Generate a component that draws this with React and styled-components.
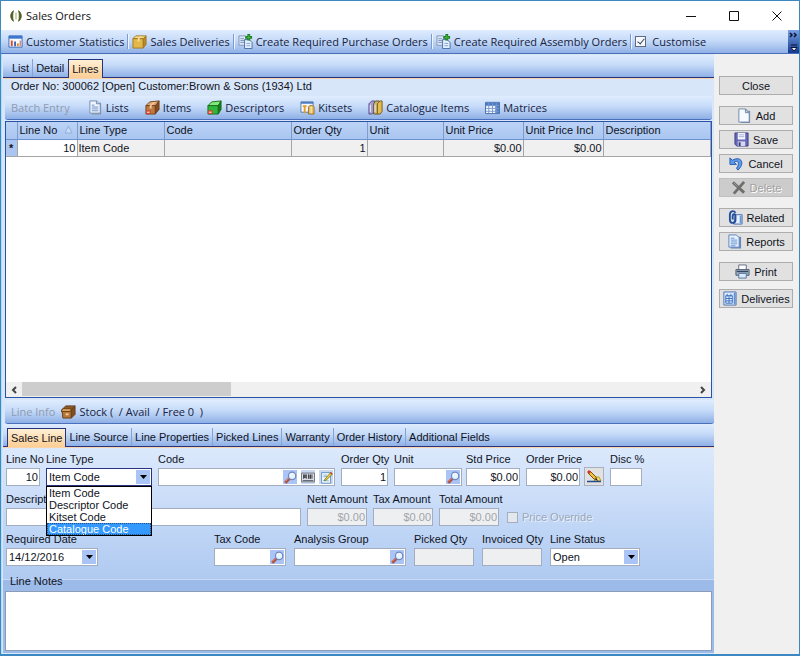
import React, { useState } from 'react';
import styled, { createGlobalStyle, css } from 'styled-components';

const GlobalStyle = createGlobalStyle`
	* {
		box-sizing: border-box;
	}

	body {
		margin: 0;
		background: #f0f0f0;
		color: #10131c;
		font-family: 'Liberation Sans', Arial, sans-serif;
		font-size: 11px;
		line-height: 14px;
	}

	button,
	input,
	select,
	textarea {
		margin: 0;
		color: inherit;
		font: inherit;
	}

	svg {
		flex-shrink: 0;
	}
`;

const barGradient = 'linear-gradient(#dfecfe, #c6dbf9 45%, #8fb0e6)';

const Window = styled.div`
	display: flex;
	flex-direction: column;
	min-height: 100vh;
	border: 1px solid #3c88c2;
	border-bottom-width: 2px;
`;

const TitleBar = styled.header`
	display: flex;
	align-items: center;
	height: 29px;
	padding: 0 1px 0 8px;
	background: #fff;

	h1 {
		flex: 1;
		margin: 0;
		padding-left: 3px;
		font: 11px/16px 'Open Sans', sans-serif;
		color: #111;
	}
`;

const WindowButton = styled.button`
	display: flex;
	align-items: center;
	justify-content: center;
	width: 43px;
	height: 27px;
	padding: 0;
	border: 0;
	background: none;
`;

const Toolbar = styled.div`
	display: flex;
	align-items: center;
	height: 24px;
	padding-left: ${(props) => (props.$inset ? '6px' : '7px')};
	background: ${barGradient};
	border-bottom: 1px solid #4a70bd;
	border-radius: ${(props) => (props.$inset ? '3px 0 3px 3px' : '0')};
	font: 11px/16px 'Open Sans', sans-serif;
	white-space: nowrap;
`;

const ToolCaption = styled.span`
	margin-right: ${(props) => props.$gap || 0}px;
	color: #8f9bb0;
`;

const ToolButton = styled.button`
	display: flex;
	align-items: center;
	gap: 3px;
	margin-right: ${(props) => (props.$loose ? '16px' : '0')};
	padding: 0;
	border: 0;
	background: none;
	color: #16233f;
	white-space: pre;
`;

const ToolCheck = styled.label`
	display: flex;
	align-items: center;
	gap: 6px;
	color: #16233f;
`;

const Tick = styled.input`
	appearance: none;
	width: 11px;
	height: 11px;
	border: 1px solid #5d6a80;
	background: ${(props) => (props.disabled ? '#e3e7ee' : '#f6f9fd')};

	&:disabled {
		border-color: #a5aebd;
	}

	&:checked::after {
		content: '';
		display: block;
		width: 3px;
		height: 6px;
		margin: 0 0 0 3px;
		border: solid #3a4558;
		border-width: 0 1px 1px 0;
		transform: rotate(40deg);
	}
`;

const Separator = styled.span`
	width: 2px;
	height: 15px;
	margin: 0 3px;
	border-left: 1px solid #7d9ad0;
	border-right: 1px solid #eef5ff;
`;

const Overflow = styled.button`
	align-self: stretch;
	width: 11px;
	margin-left: auto;
	padding: 0;
	border: 0;
	background: linear-gradient(#7aa0e4, #14388d);
`;

const Body = styled.div`
	display: flex;
	flex: 1;
`;

const Main = styled.main`
	display: flex;
	flex-direction: column;
	flex: 1;
	min-width: 0;
	padding: 1px 0 1px 1px;
	border-left: 1px solid #b5dcf5;
	background: #d8e6fa;
`;

const TabStrip = styled.div`
	display: flex;
	align-items: flex-end;
	height: 23px;
	padding-left: ${(props) => (props.$deep ? '6px' : '4px')};
	border-bottom: 1px solid #27347d;
	background: ${barGradient};
	box-shadow: 0 1px #fbd3ab;
`;

const Tab = styled.button`
	height: 18px;
	margin-bottom: 0;
	padding: 0 3px;
	border: 0;
	border-right: 1px solid ${(props) => (props.$last ? 'transparent' : '#86a3d8')};
	background: none;
	white-space: nowrap;

	${(props) =>
		props.$active &&
		css`
			height: 19px;
			margin-bottom: -1px;
			border: 1px solid #27347d;
			border-bottom: 0;
			background: linear-gradient(#fff0d5, #fdce94);
		`}
`;

const OrderInfo = styled.div`
	height: 18px;
	padding: 1px 8px;
`;

const Inset = styled.div`
	padding-top: ${(props) => props.$top || 0}px;
	padding-left: 2px;
	padding-right: ${(props) => props.$right || 0}px;
`;

const GridPanel = styled.div`
	display: flex;
	flex-direction: column;
	flex: 1;
	min-height: 220px;
	margin: 1px 2px 1px 2px;
	border: 1px solid #2a52a5;
	background: #fff;
`;

const GridArea = styled.div`
	flex: 1;
	overflow: hidden;
`;

const Grid = styled.table`
	width: 100%;
	table-layout: fixed;
	border-collapse: collapse;

	th {
		height: 17px;
		padding: 0 2px;
		border-right: 1px solid #7f9ccf;
		border-bottom: 1px solid #6e92d1;
		background: linear-gradient(#bcd3f6, #a9c5f0);
		font-weight: 400;
		text-align: left;
		white-space: nowrap;
	}

	td {
		height: 17px;
		padding: 0 1px;
		border-right: 1px solid #a5a5a5;
		border-bottom: 1px solid #a5a5a5;
		background: #f0f0f0;
		white-space: nowrap;
	}

	.marker {
		padding: 0;
		background: #a9c5f0;
		text-align: center;
		font-weight: 700;
	}

	.current {
		background: #fff;
	}

	.number {
		text-align: right;
	}

	svg {
		float: right;
		margin: 2px 2px 0 0;
	}
`;

const ScrollBar = styled.div`
	display: flex;
	height: 15px;
	background: #f0f0f0;

	button {
		display: flex;
		align-items: center;
		justify-content: center;
		width: 16px;
		padding: 0;
		border: 0;
		background: none;
	}
`;

const Track = styled.div`
	flex: 1;

	&::before {
		content: '';
		display: block;
		width: 31%;
		height: 14px;
		background: #cdcdcd;
	}
`;

const LineForm = styled.form`
	margin-top: 1px;
	background: linear-gradient(#dce9fc, #bcd3f5 45%, #98b7e7);
`;

const Fields = styled.div`
	display: flex;
	flex-direction: column;
	gap: 5px;
	padding: 3px 3px 13px 3px;
`;

const FieldRow = styled.div`
	display: flex;
	align-items: flex-end;
	gap: ${(props) => props.$gap || 6}px;
`;

const FieldPair = styled.div`
	display: flex;
	align-items: flex-end;
	gap: 4px;
`;

const Field = styled.div`
	position: relative;
	width: ${(props) => props.$width}px;

	label {
		display: block;
		height: 17px;
		padding-top: 1px;
		white-space: nowrap;
	}
`;

const FieldBox = styled.div`
	display: flex;
	align-items: center;
	width: ${(props) => (props.$width ? `${props.$width}px` : '100%')};
	height: 18px;
	padding: 1px;
	border: 1px solid ${(props) => (props.$open ? '#27347d' : '#a3adbd')};
	background: ${(props) => (props.$disabled ? '#eeeff1' : '#fff')};

	input,
	select {
		appearance: none;
		flex: 1;
		min-width: 0;
		height: 14px;
		padding: 0 0 0 1px;
		border: 0;
		outline: 0;
		background: none;
		text-align: ${(props) => (props.$right ? 'right' : 'left')};
	}

	input:disabled {
		color: #a0a4aa;
	}
`;

const BoxButton = styled.button`
	display: flex;
	align-items: center;
	justify-content: center;
	width: 14px;
	height: 14px;
	margin-left: ${(props) => (props.$spaced ? '4px' : '0')};
	padding: 0;
	border: 0;
	background: ${(props) => (props.$plain ? '#c9d9f4' : '#a9c4f5')};
`;

const OptionList = styled.ul`
	position: absolute;
	z-index: 1;
	top: 100%;
	left: 0;
	width: 100%;
	margin: 0;
	padding: 0;
	border: 1px solid #000;
	background: #fff;
	list-style: none;
`;

const Option = styled.li`
	height: 12px;
	padding-left: 2px;
	line-height: 12px;
	${(props) =>
		props.$selected &&
		css`
			background: #3399ff;
			color: #fff;
			outline: 1px dotted #26507c;
			outline-offset: -1px;
		`}
`;

const EditButton = styled.button`
	width: 20px;
	height: 19px;
	padding: 1px;
	border: 1px solid #a9b0bb;
	background: #e1e1e1;
`;

const Override = styled.label`
	display: flex;
	align-items: center;
	gap: 4px;
	height: 18px;
	margin-left: 2px;
	color: #9ba7ba;
	text-shadow: 1px 1px #eaf2fd;
`;

const Notes = styled.div`
	padding: 0 2px 2px 2px;
	border-top: 1px solid #c9dbf6;
	background: #9dbbe9;

	label {
		position: relative;
		top: -6px;
		display: block;
		height: 11px;
		padding-left: 5px;
	}

	textarea {
		display: block;
		width: 100%;
		height: 60px;
		border: 1px solid #8b9cb9;
		background: #fff;
		resize: none;
	}
`;

const Side = styled.aside`
	display: flex;
	flex-direction: column;
	gap: 11px;
	width: 85px;
	padding: 22px 6px 0 5px;
	background: #f0f0f0;
`;

const ButtonGroup = styled.div`
	display: flex;
	flex-direction: column;
	gap: ${(props) => props.$gap || 5}px;
`;

const SideButton = styled.button`
	display: flex;
	align-items: center;
	justify-content: center;
	gap: 4px;
	height: 19px;
	padding: 0;
	border: 1px solid #adadad;
	background: #e1e1e1;

	&:disabled {
		border-color: #bfbfbf;
		background: #ccc;
		color: #a0a0a0;
		text-shadow: 1px 1px #fff;
	}
`;

const icons = {
	logo: (
		<>
			<path d="M5 2C1 5 1 11 5 14C4 10 4 6 5 2Z" fill="#4e5a1c" stroke="#4e5a1c" />
			<path d="M11 2C15 5 15 11 11 14C12 10 12 6 11 2Z" fill="#4e5a1c" stroke="#4e5a1c" />
			<path d="M8 4v8" stroke="#b4bd86" strokeWidth="1.5" />
		</>
	),
	stats: (
		<>
			<path d="M1 2h14v12H1z" fill="#f7faff" stroke="#3668b5" />
			<path d="M1 2h14v3H1z" fill="#3d76cc" />
			<path d="M4 7v6" stroke="#d9482b" strokeWidth="2" />
			<path d="M7.500 8v5" stroke="#3a66b8" strokeWidth="2" />
			<path d="M10.500 10v3" stroke="#e08c25" strokeWidth="2" />
			<path d="M13 7v6" stroke="#d9482b" />
		</>
	),
	box: (
		<>
			<path d="M1 5l3-3h11l-3 3z" fill="#f8dd82" stroke="#a07a26" />
			<path d="M1 5h11v10H1z" fill="#e3b848" stroke="#a07a26" />
			<path d="M12 5l3-3v9l-3 4z" fill="#b98a26" stroke="#a07a26" />
			<path d="M6 5l3-3h1L8 5v3H6z" fill="#f8e09a" />
		</>
	),
	copyAdd: (
		<>
			<path d="M1 2h7v10H1z" fill="#dce8f8" stroke="#8094b5" />
			<path d="M2.500 5h4M2.500 7h4M2.500 9h4" stroke="#7690ba" />
			<path d="M7 6h5l3 3v6.500H7z" fill="#e5f0ff" stroke="#496f9f" />
			<path d="M9 10h4M9 12.500h4" stroke="#7ca0d5" />
			<path d="M11.500 0v7M8 3.500h7" stroke="#1b7b21" strokeWidth="3" />
			<path d="M11.500 1v5M9 3.500h5" stroke="#48bb43" />
		</>
	),
	list: (
		<>
			<path d="M4 3h10v12.500H4z" fill="#8296b5" />
			<path d="M2 1h7l4 3v10H2z" fill="#eef5ff" stroke="#7489ab" />
			<path d="M9 1v3h4" fill="#c5d7ef" stroke="#7489ab" />
			<path d="M4 5.500h3M4 7.500h7M4 9.500h7M4 11.500h7" stroke="#6e91c8" />
		</>
	),
	items: (
		<>
			<path d="M1 6l4-4 10-1-3 5z" fill="#dfa873" stroke="#74431f" />
			<path d="M1 6h10v9H1z" fill="#bd7a3f" stroke="#74431f" />
			<path d="M11 6l4-5v9l-4 5z" fill="#854b20" stroke="#74431f" />
			<path d="M5 6l4-4 2 0-4 4v3H5z" fill="#f2cda2" />
			<path d="M1 11h5v4H1z" fill="#d3452d" />
			<path d="M2 13h3" stroke="#fff" />
		</>
	),
	descriptors: (
		<>
			<path d="M1 6l4-4 10-1-3 5z" fill="#82ea7a" stroke="#16701c" />
			<path d="M1 6h11v9H1z" fill="#32b53b" stroke="#16701c" />
			<path d="M12 6l3-5v9l-3 5z" fill="#157a20" stroke="#16701c" />
			<path d="M1 11h5v4H1z" fill="#d3452d" />
			<path d="M2 13h3" stroke="#fff" />
		</>
	),
	kitsets: (
		<>
			<path d="M1 2h13v11H1z" fill="#f4f7fc" stroke="#59779f" />
			<path d="M1 2h13v2H1z" fill="#4c7cc7" />
			<path d="M5 6v8M3 6.500h4" stroke="#e49c25" strokeWidth="2" />
			<path d="M9 15V8c0-3 6-3 6 0v7z" fill="#e7bf66" stroke="#94702b" />
			<path d="M12 7v7" stroke="#fff0bd" />
		</>
	),
	catalogue: (
		<>
			<path d="M1 4l3-3h3v11l-3 3H1z" fill="#a89bd4" stroke="#5a4e91" />
			<path d="M6 4l2-3h4v11l-2 3H6z" fill="#c5b676" stroke="#605328" />
			<path d="M10 4l3-3h2v11l-2 3h-3z" fill="#e6bd4a" stroke="#7a581a" />
			<path d="M2.500 5v8M7.500 5v8" stroke="#efefff" />
		</>
	),
	matrix: (
		<>
			<path d="M0.500 2.500h15v12h-15z" fill="#f6faff" stroke="#4266a7" />
			<path d="M1 3h14v3H1zM11 6h4v8h-4z" fill="#4c7cc8" />
			<path d="M1 6h14M1 9h14M1 12h14M4 3v11M8 3v11M12 3v11" stroke="#7898cc" />
		</>
	),
	stock: (
		<>
			<path d="M1 6h10v9H2z" fill="#b87638" stroke="#684019" />
			<path d="M11 6l4-4v9l-4 4z" fill="#824c1d" stroke="#684019" />
			<path d="M1 6l4-4h10l-4 4z" fill="#8a5a2c" stroke="#684019" />
			<path d="M0 8l2-3h9l-1 3z" fill="#dda35c" stroke="#684019" />
			<path d="M5 11h3" stroke="#f0cf9c" strokeWidth="2" />
		</>
	),
	search: (
		<>
			<path d="M1.500 14.500l5-5" stroke="#ad493d" strokeWidth="3.500" />
			<path d="M2 13l4-4" stroke="#eb9c79" />
			<circle cx="10" cy="6" r="4.500" fill="#e4f5ff" stroke="#7385bb" strokeWidth="1.500" />
			<path d="M7.500 6c0-2 1-3 3-3" fill="none" stroke="#fff" />
		</>
	),
	barcode: (
		<>
			<path d="M0.500 3.500h15v10h-15z" fill="#dadde3" stroke="#616773" />
			<path d="M3 5v5M6 5v5M8.500 5v5M12.500 5v5" stroke="#20242c" />
			<path d="M4.500 5v4M10.500 5v5" stroke="#20242c" strokeWidth="1.500" />
			<path d="M2 12h12" stroke="#555d69" />
		</>
	),
	note: (
		<>
			<path d="M2 2h11v13H2z" fill="#f6fbff" stroke="#4d83b5" />
			<path d="M4 5h5M4 7h5M4 12h7" stroke="#78a5cf" />
			<path d="M6 10l7-8 2 2-7 7-3 1z" fill="#f7cf35" stroke="#64752b" />
			<path d="M13 2l2 2" stroke="#cb4227" strokeWidth="2" />
		</>
	),
	pencil: (
		<>
			<path d="M8 12l2-4h3l2 4z" fill="#f5e36f" stroke="#b39a33" />
			<path d="M1 12.500h14" stroke="#214a91" strokeWidth="1.500" />
			<path d="M2 4l2-2 6 6 1 3-3-1z" fill="#f2c12d" stroke="#77571a" />
			<path d="M1 3l2-2 2 2-2 2z" fill="#cf352b" />
			<path d="M9.500 9.500l2 2" stroke="#222" />
		</>
	),
	page: (
		<>
			<path d="M4 3h10v13H4z" fill="#7b8dac" />
			<path d="M2 1h7l4 4v10H2z" fill="#f7fbff" stroke="#7287ab" />
			<path d="M9 1v4h4z" fill="#bbd0ec" stroke="#7287ab" />
		</>
	),
	save: (
		<>
			<path d="M1 1h14v14H3l-2-2z" fill="#6668b6" stroke="#3e3e85" />
			<path d="M4 1h8v7H4z" fill="#f5f7ff" />
			<path d="M5 3h6M5 5h6" stroke="#a9afd5" />
			<path d="M4 10h8v5H4z" fill="#d4d8ee" />
			<path d="M5 11h2v4H5z" fill="#363773" />
		</>
	),
	undo: (
		<path
			d="M1 2v7h7L5.500 6.500C10 4 12 8 8 13l1.500 2C17 9 14-1 3.500 4.500z"
			fill="#5d9ae7"
			stroke="#2859af"
			strokeLinejoin="round"
		/>
	),
	remove: (
		<>
			<path d="M2 2.500l12 11M14 2L3 14.500" stroke="#6f6f6f" strokeWidth="3" />
			<path d="M3 3l4 4" stroke="#999" />
		</>
	),
	related: (
		<>
			<path d="M8 5h7v10H6z" fill="#e5efff" stroke="#456caa" />
			<path d="M13.500 6v8" stroke="#6b94d4" strokeWidth="2" />
			<path
				d="M8 3C6 0 2 1 2 5v5c0 5 6 5 6 0V6c0-2-3-2-3 0v4"
				fill="none"
				stroke="#244f9d"
				strokeWidth="2"
			/>
		</>
	),
	report: (
		<>
			<path d="M4 3h11v12.500H4z" fill="#6586ba" />
			<path d="M2 1h8l3 3v10H2z" fill="#e8f2ff" stroke="#5d82b8" />
			<path d="M4 4.500h4M4 6.500h7M4 8.500h7M4 10.500h7M4 12.500h5" stroke="#6391cf" />
		</>
	),
	print: (
		<>
			<path d="M4 1h8v6H4z" fill="#fff" stroke="#5e6b80" />
			<path d="M1 6h14v6H1z" fill="#a8b6ca" stroke="#42536e" />
			<path d="M2 8h12" stroke="#35455e" strokeWidth="1.500" />
			<path d="M4 10h8v5H4z" fill="#d8eaff" stroke="#54729d" />
			<path d="M12.500 10h1" stroke="#41bd46" />
		</>
	),
	deliveries: (
		<>
			<path d="M2 1h13v14H2z" fill="#e1edff" stroke="#486fa9" />
			<path d="M13.500 2v12" stroke="#6590cf" strokeWidth="2" />
			<path d="M4 5h7v8H4zM5.500 3v3M9.500 3v3M4 8h7M4 10.500h7M7.500 5v8" fill="none" stroke="#3970bd" />
		</>
	),
};

const Icon = ({ name, size = 15 }) => (
	<svg width={size} height={size} viewBox="0 0 16 16" fill="none" aria-hidden="true">
		{icons[name]}
	</svg>
);

const DownArrow = () => (
	<svg width="7" height="4" viewBox="0 0 7 4" aria-hidden="true">
		<path d="M0 0h7L3.500 4z" fill="#000" />
	</svg>
);

const orderTools = [
	{ icon: 'stats', label: 'Customer Statistics' },
	{ icon: 'box', label: 'Sales Deliveries' },
	{ icon: 'copyAdd', label: 'Create Required Purchase Orders' },
	{ icon: 'copyAdd', label: 'Create Required Assembly Orders' },
];

const batchTools = [
	{ icon: 'list', label: 'Lists' },
	{ icon: 'items', label: 'Items' },
	{ icon: 'descriptors', label: 'Descriptors' },
	{ icon: 'kitsets', label: 'Kitsets' },
	{ icon: 'catalogue', label: 'Catalogue Items' },
	{ icon: 'matrix', label: 'Matrices' },
];

const columns = [
	{ label: 'Line No', width: 60, value: '10', number: true, current: true, sorted: true },
	{ label: 'Line Type', width: 87, value: 'Item Code' },
	{ label: 'Code', width: 127 },
	{ label: 'Order Qty', width: 76, value: '1', number: true },
	{ label: 'Unit', width: 76 },
	{ label: 'Unit Price', width: 80, value: '$0.00', number: true },
	{ label: 'Unit Price Incl', width: 80, value: '$0.00', number: true },
	{ label: 'Description' },
];

const lineTabs = [
	'Sales Line',
	'Line Source',
	'Line Properties',
	'Picked Lines',
	'Warranty',
	'Order History',
	'Additional Fields',
];

const lineTypes = ['Item Code', 'Descriptor Code', 'Kitset Code', 'Catalogue Code'];

const sideGroups = [
	{ buttons: [{ label: 'Close' }] },
	{
		buttons: [
			{ label: 'Add', icon: 'page' },
			{ label: 'Save', icon: 'save' },
			{ label: 'Cancel', icon: 'undo' },
			{ label: 'Delete', icon: 'remove', disabled: true },
		],
	},
	{
		buttons: [
			{ label: 'Related', icon: 'related' },
			{ label: 'Reports', icon: 'report' },
		],
	},
	{
		gap: 8,
		buttons: [
			{ label: 'Print', icon: 'print' },
			{ label: 'Deliveries', icon: 'deliveries' },
		],
	},
];

const Tabs = ({ tabs, active, onSelect, deep }) => (
	<TabStrip role="tablist" $deep={deep}>
		{tabs.map((tab, i) => (
			<Tab
				key={tab}
				type="button"
				role="tab"
				aria-selected={tab === active}
				$active={tab === active}
				$last={i === tabs.length - 1 || tabs[i + 1] === active}
				onClick={() => onSelect(tab)}
			>
				{tab}
			</Tab>
		))}
	</TabStrip>
);

const TextField = ({ id, label, width, value = '', right, disabled, search, children }) => (
	<Field $width={width}>
		<label htmlFor={id}>{label}</label>
		<FieldBox $right={right} $disabled={disabled}>
			<input id={id} defaultValue={value} disabled={disabled} />
			{search && (
				<BoxButton type="button" aria-label={`Find ${label}`}>
					<Icon name="search" size={13} />
				</BoxButton>
			)}
			{children}
		</FieldBox>
	</Field>
);

const LineTypeField = () => {
	const [open, setOpen] = useState(true);
	const [value, setValue] = useState('Item Code');

	const choose = (type) => {
		setValue(type);
		setOpen(false);
	};

	return (
		<Field $width={106}>
			<label htmlFor="line-type">Line Type</label>
			<FieldBox $open={open}>
				<select id="line-type" value={value} onChange={(e) => setValue(e.target.value)}>
					{lineTypes.map((type) => (
						<option key={type}>{type}</option>
					))}
				</select>
				<BoxButton type="button" aria-label="Show line types" onClick={() => setOpen((prev) => !prev)}>
					<DownArrow />
				</BoxButton>
			</FieldBox>
			{open && (
				<OptionList role="listbox" aria-label="Line types">
					{lineTypes.map((type) => (
						<Option
							key={type}
							role="option"
							aria-selected={type === 'Catalogue Code'}
							$selected={type === 'Catalogue Code'}
							onClick={() => choose(type)}
						>
							{type}
						</Option>
					))}
				</OptionList>
			)}
		</Field>
	);
};

const LinesGrid = () => (
	<GridPanel>
		<GridArea>
			<Grid>
				<colgroup>
					<col width="11" />
					{columns.map(({ label, width }) => (
						<col key={label} width={width} />
					))}
				</colgroup>
				<thead>
					<tr>
						<th></th>
						{columns.map(({ label, sorted }) => (
							<th key={label}>
								{label}
								{sorted && (
									<svg width="9" height="9" viewBox="0 0 9 9" aria-hidden="true">
										<path d="M4.500 1l3.500 7H1z" fill="#c9dcf8" stroke="#8faddf" />
									</svg>
								)}
							</th>
						))}
					</tr>
				</thead>
				<tbody>
					<tr>
						<td className="marker">*</td>
						{columns.map(({ label, value, number, current }) => (
							<td key={label} className={`${number ? 'number' : ''} ${current ? 'current' : ''}`}>
								{value}
							</td>
						))}
					</tr>
				</tbody>
			</Grid>
		</GridArea>
		<ScrollBar>
			<button type="button" aria-label="Scroll left">
				<svg width="6" height="8" viewBox="0 0 6 8">
					<path d="M5 1L2 4l3 3" fill="none" stroke="#444" strokeWidth="2" />
				</svg>
			</button>
			<Track />
			<button type="button" aria-label="Scroll right">
				<svg width="6" height="8" viewBox="0 0 6 8">
					<path d="M1 1l3 3-3 3" fill="none" stroke="#444" strokeWidth="2" />
				</svg>
			</button>
		</ScrollBar>
	</GridPanel>
);

const SalesLineForm = () => (
	<LineForm>
		<Fields>
			<FieldRow>
				<TextField id="line-no" label="Line No" width={34} value="10" right />
				<LineTypeField />
				<TextField id="code" label="Code" width={177} search>
					<BoxButton type="button" aria-label="Scan barcode" $spaced $plain>
						<Icon name="barcode" size={14} />
					</BoxButton>
					<BoxButton type="button" aria-label="Edit code" $spaced $plain>
						<Icon name="note" size={13} />
					</BoxButton>
				</TextField>
				<TextField id="order-qty" label="Order Qty" width={47} value="1" right />
				<FieldPair>
					<TextField id="unit" label="Unit" width={68} search />
					<TextField id="std-price" label="Std Price" width={54} value="$0.00" right />
				</FieldPair>
				<FieldPair>
					<TextField id="order-price" label="Order Price" width={54} value="$0.00" right />
					<EditButton type="button" aria-label="Edit price">
						<Icon name="pencil" size={16} />
					</EditButton>
				</FieldPair>
				<TextField id="disc" label="Disc %" width={32} />
			</FieldRow>
			<FieldRow>
				<TextField id="description" label="Description" width={295} />
				<TextField id="nett-amount" label="Nett Amount" width={60} value="$0.00" right disabled />
				<TextField id="tax-amount" label="Tax Amount" width={60} value="$0.00" right disabled />
				<TextField id="total-amount" label="Total Amount" width={60} value="$0.00" right disabled />
				<Override>
					<Tick type="checkbox" disabled />
					Price Override
				</Override>
			</FieldRow>
			<FieldRow $gap={8}>
				<Field $width={200}>
					<label htmlFor="required-date">Required Date</label>
					<FieldBox $width={92}>
						<input id="required-date" defaultValue="14/12/2016" />
						<BoxButton type="button" aria-label="Pick date">
							<DownArrow />
						</BoxButton>
					</FieldBox>
				</Field>
				<TextField id="tax-code" label="Tax Code" width={72} search />
				<TextField id="analysis-group" label="Analysis Group" width={112} search />
				<TextField id="picked-qty" label="Picked Qty" width={60} disabled />
				<TextField id="invoiced-qty" label="Invoiced Qty" width={60} disabled />
				<Field $width={90}>
					<label htmlFor="line-status">Line Status</label>
					<FieldBox>
						<select id="line-status">
							<option>Open</option>
						</select>
						<BoxButton type="button" aria-label="Show line statuses">
							<DownArrow />
						</BoxButton>
					</FieldBox>
				</Field>
			</FieldRow>
		</Fields>
		<Notes>
			<label htmlFor="line-notes">Line Notes</label>
			<textarea id="line-notes"></textarea>
		</Notes>
	</LineForm>
);

const App = () => {
	const [orderTab, setOrderTab] = useState('Lines');
	const [lineTab, setLineTab] = useState('Sales Line');

	return (
		<>
			<GlobalStyle />
			<Window>
				<TitleBar>
					<Icon name="logo" size={14} />
					<h1>Sales Orders</h1>
					<WindowButton type="button" aria-label="Minimise">
						<svg width="10" height="10">
							<path d="M0 5.500h10" stroke="#111" />
						</svg>
					</WindowButton>
					<WindowButton type="button" aria-label="Maximise">
						<svg width="10" height="10">
							<path d="M0.500 0.500h9v9h-9z" fill="none" stroke="#111" />
						</svg>
					</WindowButton>
					<WindowButton type="button" aria-label="Close window">
						<svg width="10" height="10">
							<path d="M0.500 0.500l9 9M9.500 0.500l-9 9" stroke="#111" />
						</svg>
					</WindowButton>
				</TitleBar>
				<Toolbar>
					{orderTools.map(({ icon, label }) => (
						<React.Fragment key={label}>
							<ToolButton type="button">
								<Icon name={icon} />
								{label}
							</ToolButton>
							<Separator />
						</React.Fragment>
					))}
					<ToolCheck>
						<Tick type="checkbox" defaultChecked />
						Customise
					</ToolCheck>
					<Overflow type="button" aria-label="More tools">
						<svg width="11" height="22" viewBox="0 0 11 22">
							<path d="M2 3l2 2-2 2M6 3l2 2-2 2" fill="none" stroke="#0a1433" strokeWidth="1.500" />
							<path d="M3 15h6M3 17.500h6L6 21z" fill="#fff" stroke="#0a1433" />
						</svg>
					</Overflow>
				</Toolbar>
				<Body>
					<Main>
						<Tabs tabs={['List', 'Detail', 'Lines']} active={orderTab} onSelect={setOrderTab} deep />
						<OrderInfo>Order No: 300062 [Open] Customer:Brown &amp; Sons (1934) Ltd</OrderInfo>
						<Inset $right={2}>
							<Toolbar $inset>
								<ToolCaption $gap={18}>Batch Entry</ToolCaption>
								{batchTools.map(({ icon, label }) => (
									<ToolButton key={label} type="button" $loose>
										<Icon name={icon} />
										{label}
									</ToolButton>
								))}
							</Toolbar>
						</Inset>
						<LinesGrid />
						<Inset $top={1}>
							<Toolbar $inset>
								<ToolCaption $gap={6}>Line Info</ToolCaption>
								<ToolButton type="button">
									<Icon name="stock" />
									{'Stock (  / Avail  / Free 0  )'}
								</ToolButton>
							</Toolbar>
						</Inset>
						<Tabs tabs={lineTabs} active={lineTab} onSelect={setLineTab} />
						<SalesLineForm />
					</Main>
					<Side>
						{sideGroups.map(({ gap, buttons }) => (
							<ButtonGroup key={buttons[0].label} $gap={gap}>
								{buttons.map(({ label, icon, disabled }) => (
									<SideButton key={label} type="button" disabled={disabled}>
										{icon && <Icon name={icon} />}
										{label}
									</SideButton>
								))}
							</ButtonGroup>
						))}
					</Side>
				</Body>
			</Window>
		</>
	);
};

export default App;
